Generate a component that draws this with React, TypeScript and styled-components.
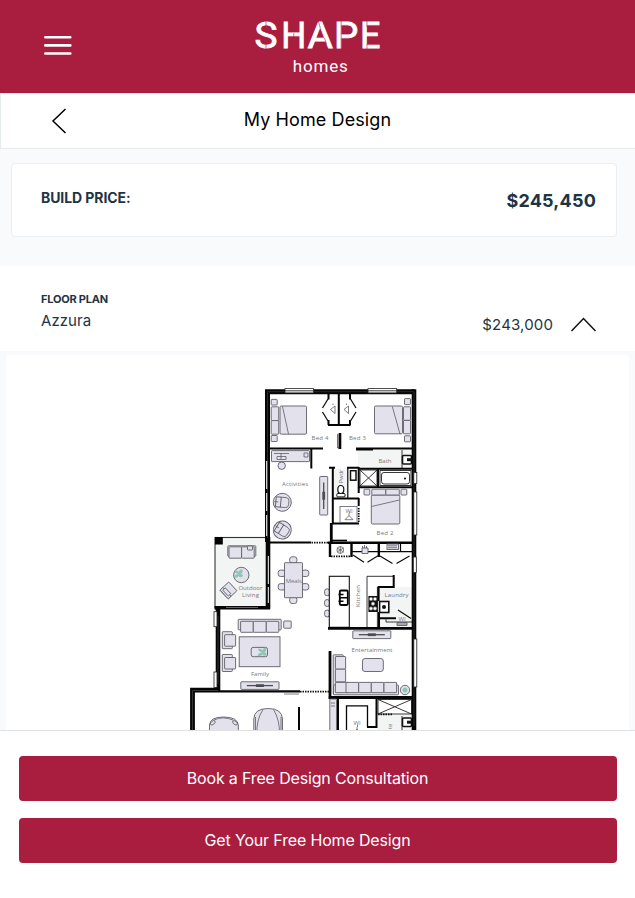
import React from "react";
import styled, { createGlobalStyle } from "styled-components";

const GlobalStyle = createGlobalStyle`
  * { box-sizing: border-box; }
  html, body { margin: 0; padding: 0; }
  body { background: #f8fafc; font-family: Inter, "Open Sans", sans-serif; color: #1d3444; overflow: hidden; }
  button { font: inherit; border: 0; padding: 0; background: none; cursor: pointer; }
`;

const Screen = styled.div`
  width: 100%;
  height: 898px;
  display: flex;
  flex-direction: column;
  overflow: hidden;
`;

const Header = styled.header`
  flex: none;
  height: 93px;
  padding: 0 43px;
  display: grid;
  grid-template-columns: 30px 1fr 30px;
  align-items: start;
  background: #a91d3f;
`;

const MenuButton = styled.button`
  margin-top: 35px;
  height: 21px;
  svg { display: block; }
`;

const Logo = styled.svg`
  display: block;
  justify-self: center;
  width: 130px;
  height: 62px;
  margin-top: 16px;
`;

const TitleBar = styled.div`
  flex: none;
  height: 56px;
  border: 1px solid #e5eaeb;
  border-right: 0;
  padding: 0 50px;
  display: grid;
  grid-template-columns: 18px 1fr 18px;
  align-items: center;
  background: #fff;
`;

const BackButton = styled.button`
  height: 26px;
  svg { display: block; }
`;

const Title = styled.h1`
  margin: 0 1px 3px 0;
  text-align: center;
  font-size: 18px;
  line-height: 24px;
  font-weight: 400;
  letter-spacing: 0.1px;
  color: #000;
`;

const Content = styled.main`
  flex: 1;
  min-height: 0;
  overflow: hidden;
`;

const PriceCard = styled.section`
  height: 74px;
  margin: 14px 18px 29px 11px;
  padding: 0 20px 0 29px;
  display: flex;
  justify-content: space-between;
  border: 1px solid #ebeff2;
  border-radius: 4px;
  background: #fff;
`;

const PriceLabel = styled.span`
  margin-top: 24px;
  font-size: 14px;
  line-height: 20px;
  font-weight: 700;
  letter-spacing: -0.08px;
`;

const PriceTotal = styled.span`
  margin-top: 24px;
  font-size: 18px;
  line-height: 26px;
  font-weight: 700;
  letter-spacing: 0.2px;
`;

const OptionRow = styled.section`
  height: 85px;
  padding: 24px 38px 0 41px;
  display: flex;
  justify-content: space-between;
  background: #fff;
`;

const OptionName = styled.div`
  display: flex;
  flex-direction: column;
  gap: 2px;
  font-size: 15px;
  line-height: 22px;
  letter-spacing: 0.05px;
`;

const OptionKind = styled.span`
  font-size: 11px;
  line-height: 18px;
  font-weight: 700;
  letter-spacing: -0.22px;
`;

const OptionPrice = styled.div`
  display: flex;
  align-items: center;
  gap: 17px;
  height: 20px;
  margin-top: 24px;
  font-size: 15px;
  letter-spacing: 0.15px;
`;

const PlanPanel = styled.section`
  height: 520px;
  margin: 4px 6px 0;
  padding-top: 25px;
  padding-left: 174px;
  border-radius: 4px;
  background: #fff;
`;

const PlanDrawing = styled.svg`
  display: block;
  width: 250px;
  height: 360px;
  .wall { stroke: #050505; fill: none; }
  .win { fill: #fff; stroke: #222; stroke-width: 0.8; }
  .line { fill: none; stroke: #222; stroke-width: 0.9; }
  .fold { fill: none; stroke: #111; stroke-width: 1.3; }
  .dots { fill: none; stroke: #111; stroke-width: 1.8; stroke-dasharray: 1.5 1; }
  .furn { fill: #e3e2ec; stroke: #5d5d68; stroke-width: 0.9; }
  .thin { fill: none; stroke: #5d5d68; stroke-width: 0.8; }
  .wet { fill: #f2f5f4; stroke: none; }
  .plant { fill: #91c5b4; stroke: none; }
  text { font-family: "Open Sans", sans-serif; font-size: 6px; fill: #77777c; text-anchor: middle; }
`;

const Footer = styled.footer`
  flex: none;
  height: 168px;
  padding: 25px 18px 0 19px;
  display: flex;
  flex-direction: column;
  gap: 17px;
  border-top: 1px solid #e0e2e4;
  background: #fff;
`;

const ActionButton = styled.button`
  height: 45px;
  flex: none;
  border-radius: 4px;
  && {
    background: #a91d3f;
    padding: 0 21px 2px 0;
    font-size: 16px;
    letter-spacing: -0.16px;
  }
  color: #fff;
`;

type Point = { x: number; y: number };
type Box = Point & { w: number; h: number; r?: number };

const Piece = ({ x, y, w, h, r = 0.6 }: Box) => <rect className="furn" x={x} y={y} width={w} height={h} rx={r} />;

const MediaUnit = ({ x, y, w, h }: Box) => (
  <g>
    <Piece x={x} y={y} w={w} h={h} />
    {w > h ? (
      <>
        <path d={`M${x + 6} ${y + h / 2}H${x + w - 6}`} stroke="#4c4c55" strokeWidth="1.3" />
        <path d={`M${x + w / 2 - 4} ${y + h / 2}h8`} stroke="#4c4c55" strokeWidth="2.8" />
      </>
    ) : (
      <>
        <path d={`M${x + w / 2} ${y + 6}V${y + h - 6}`} stroke="#4c4c55" strokeWidth="1.3" />
        <path d={`M${x + w / 2} ${y + h / 2 - 4}v8`} stroke="#4c4c55" strokeWidth="2.8" />
      </>
    )}
  </g>
);

const TubChair = ({ x, y, turn }: Point & { turn: number }) => (
  <g transform={`translate(${x} ${y}) rotate(${turn})`}>
    <circle className="furn" r="9" />
    <path className="thin" d="M-2 -5h5.5q3 0 3 3v4q0 3 -3 3H-2" />
    <rect className="furn" x="-6.5" y="-5" width="5" height="10" />
    <path className="thin" d="M-8 0h4" />
  </g>
);

const ArmChair = ({ x, y }: Point) => (
  <g>
    <Piece x={x} y={y} w={10} h={17} />
    <Piece x={x + 2.3} y={y + 3} w={11} h={11.5} />
  </g>
);

const Wardrobe = ({ x, y }: Point) => (
  <path className="thin" d={`M${x} ${y}l-4 4.2h8zM${x} ${y}v-2q2 -1 0 -2`} />
);

const Basin = ({ x, y }: Point) => (
  <g>
    <rect x={x} y={y} width="9" height="8.5" rx="1" fill="#fff" stroke="#111" strokeWidth="1.6" />
    <path d={`M${x + 9} ${y + 4.2}h-4.5`} stroke="#111" strokeWidth="3" />
  </g>
);

const Plant = ({ x, y }: Point) => (
  <path
    className="plant"
    transform={`translate(${x} ${y})`}
    d="M0 0Q-5 -1 -4 -4Q-1 -4 0 -2Q1 -6 4 -4Q4 -1 2 0Q6 1 3 3Q1 4 0 2Q-2 5 -5 3Q-4 0 0 0Z"
  />
);

const Bedrooms = () => (
  <g>
    <path className="wall" strokeWidth="2" d="M338.8 394V425M328 425H350.5M328.5 394v5.5M328.5 420v5M350 394v5.5M350 420v5" />
    <path className="fold" d="M328 399l-5.5 9M322.5 412l5.5 9M350.5 399l5.5 9M356 412l-5.5 9" />
    <Piece x={280} y={406} w={26.5} h={28.2} r={1.2} />
    <Piece x={271.2} y={406.8} w={7.5} h={13.8} />
    <Piece x={271.2} y={420.6} w={7.5} h={13.6} />
    <Piece x={271.2} y={399.4} w={6} h={5.6} />
    <Piece x={271.2} y={435.5} w={6} h={6} />
    <path className="thin" d="M282.5 406.5L288.5 434" />
    <Piece x={374.5} y={406} w={28} h={27.8} r={1.2} />
    <Piece x={403.5} y={406.8} w={7} h={13.6} />
    <Piece x={403.5} y={420.4} w={7} h={13.4} />
    <Piece x={404.5} y={398.6} w={6} h={6} />
    <Piece x={404.5} y={435.8} w={6} h={6} />
    <path className="thin" d="M392.3 406.5L400 434" />
    <path className="thin" d="M330.5 409.5l4.5 -3.5v7.5zM333 405v-1.5M344 409.5l4.5 -3.5v7.5zM346.5 405v-1.5" />
    <text x="320" y="440.2" textLength="17">Bed 4</text>
    <text x="357.4" y="440.2" textLength="17">Bed 3</text>
    <path className="wall" strokeWidth="2" d="M270 448.4H323M356 448.4H412" />
    <path className="wall" strokeWidth="2.6" d="M340 433V449" />
    <path className="line" d="M337.8 434v14h2" />
  </g>
);

const Activities = () => (
  <g>
    <Piece x={271.5} y={450.6} w={38} h={11} />
    <path className="thin" d="M274 453.5h15M277 456.5h9v3h-9zM281 453v6M304 453h4v4h-4z" />
    <circle className="furn" cx="281.7" cy="465.7" r="3.7" />
    <path className="wall" strokeWidth="2" d="M311.3 448V468.5" />
    <TubChair x={282.3} y={502.3} turn={5} />
    <TubChair x={282.3} y={530} turn={32} />
    <MediaUnit x={319.7} y={476.5} w={8} h={38.5} />
    <text x="295" y="485.9" textLength="26">Activities</text>
    <path className="wall" strokeWidth="2" d="M270 542.6H311" />
    <path className="dots" d="M311.5 542.6H328" />
  </g>
);

const BathRooms = () => (
  <g>
    <rect className="wet" x="358" y="450" width="53" height="18" />
    <rect className="wet" x="333" y="469" width="14" height="28" />
    <path className="wall" strokeWidth="2" d="M332.8 467v56.5M329 467.7h6M347 467.7h12M358.7 467v26M332 498.6H359M332 523.4H359M358.7 498v8M356 449.4h17" />
    <path className="wall" strokeWidth="1.2" d="M347.8 468V498" />
    <rect x="350.5" y="470.7" width="5.5" height="9.5" fill="#fff" stroke="#111" strokeWidth="1.5" />
    <path className="dots" d="M358.7 508V523" />
    <rect className="thin" x="340" y="506.5" width="17" height="16" />
    <text x="349" y="513">WI</text>
    <Wardrobe x={349} y={515.5} />
    <rect x="336.8" y="493.5" width="8.2" height="3.4" rx="1" fill="#fff" stroke="#111" />
    <ellipse cx="340.8" cy="489.5" rx="3" ry="4" fill="#fff" stroke="#111" strokeWidth="1.2" />
    <text transform="translate(342.6 476.5) rotate(-90)" textLength="14">Pwdr</text>
    <text x="385" y="462.7" textLength="13">Bath</text>
    <path className="line" d="M402 450V468" />
    <Basin x={402.5} y={455.5} />
    <path className="wall" strokeWidth="2" d="M358 487.3H412M378 469V487M358 468.8H412" />
    <rect className="line" x="360" y="470" width="17" height="16" />
    <path className="line" d="M360 470l17 16M377 470l-17 16" />
    <rect className="line" x="380" y="470.5" width="31" height="15" />
    <rect className="line" x="381.5" y="472.5" width="28" height="11.5" rx="2.5" />
    <circle cx="405" cy="478.5" r="1" />
    <Piece x={371.3} y={495} w={28.5} h={29} r={1.2} />
    <Piece x={371.8} y={489.2} w={14} h={5.8} />
    <Piece x={385.8} y={489.2} w={13.5} h={5.8} />
    <Piece x={364} y={489.2} w={5.8} h={5.8} />
    <Piece x={401} y={489.2} w={5.8} h={5.8} />
    <path className="thin" d="M371.5 506.5L399.5 500" />
    <text x="385" y="535.4" textLength="17">Bed 2</text>
    <path className="wall" strokeWidth="2.8" d="M331.3 523V543" />
    <path className="wall" strokeWidth="1.4" d="M332 540.6h15" />
  </g>
);

const Outdoor = () => (
  <g>
    <rect x="215" y="537.5" width="52" height="70" fill="#f2f5f4" stroke="#333" strokeWidth="1.1" />
    <rect x="215" y="537" width="7.8" height="7.5" />
    <path className="wall" strokeWidth="4.6" d="M268 537V609" />
    <path d="M268.3 556v28M268.3 587v16" stroke="#fff" strokeWidth="1" />
    <path className="wall" strokeWidth="3.4" d="M214.5 607.7H270" />
    <path d="M226 607.4h32" stroke="#999" strokeWidth=".7" />
    <Piece x={227.8} y={545.8} w={28} h={10.5} />
    <Piece x={229} y={546.8} w={12.6} h={11.4} />
    <Piece x={241.6} y={546.8} w={12.6} h={11.4} />
    <Piece x={247.5} y={546} w={5} h={4} />
    <circle className="furn" cx="241.3" cy="575" r="7.7" />
    <Plant x={238.7} y={574} />
    <g transform="rotate(-43 228.4 590.5)">
      <Piece x={222.5} y={584.5} w={12} h={12} />
      <Piece x={222.5} y={584.5} w={4} h={12} />
      <Piece x={224.5} y={586.5} w={3.5} h={8} />
    </g>
    <text x="250.4" y="590.2" textLength="24">Outdoor</text>
    <text x="250.4" y="597.4" textLength="17">Living</text>
  </g>
);

const Meals = () => (
  <g>
    {[[293.3, 560], [293.3, 600.3], [281.8, 573.3], [281.8, 586.8], [305.2, 573.3], [305.2, 586.8]].map(([x, y]) => (
      <Piece key={`${x}-${y}`} x={x - 3.6} y={y - 3.2} w={7.2} h={6.4} r={2.4} />
    ))}
    <Piece x={284.5} y={562.7} w={18} h={35} />
    <text x="293.8" y="583.2" textLength="16">Meals</text>
  </g>
);

const Kitchen = () => (
  <g>
    <rect className="wet" x="379" y="587" width="33" height="40" />
    <path className="wall" strokeWidth="2.4" d="M328 542.7H413M330 542v15M351.5 542v15M378.8 542v15" />
    <path className="wall" strokeWidth="1.2" d="M331 540.3h16M352 551.6H378M380 551.6H412M400.5 543v8.5" />
    <path className="dots" d="M331 556.4H351" />
    <path className="thin" d="M340.3 546.5v7M337 548l6.6 4M343.6 548l-6.6 4" />
    <circle className="thin" cx="340.3" cy="550" r="3.4" />
    <path className="furn" d="M362 548h6v5.5h-6zM362.5 548v-2M364.5 548v-3M366.5 548v-2" />
    <rect className="furn" x="387" y="544" width="11.5" height="5.5" />
    <path className="thin" d="M388 545.8h9M388 547.7h9" />
    <path className="fold" d="M353 555l11 7.2M367.5 562.2l10.5 -6.5M380 556l12.5 7.5M396.5 563.5l13 -7.5" />
    {[592.3, 603, 613.5].map((y) => <Piece key={y} x={324.6} y={y - 3.5} w={5} h={7} r={2.5} />)}
    <rect x="329.3" y="576.3" width="20" height="51" fill="#fff" stroke="#111" strokeWidth="1.1" />
    <rect x="339.8" y="590.5" width="8" height="14.5" rx="1.2" fill="#fff" stroke="#000" strokeWidth="1.8" />
    <path className="wall" strokeWidth="1.6" d="M340 597.8h8M338.5 594.5h5M338.5 601.3h5" />
    <text transform="translate(360 596) rotate(-90)" textLength="22">Kitchen</text>
    <path className="line" d="M367 627V576.3H394M377.4 627V587" />
    <path className="wall" strokeWidth="2" d="M393.7 575v12H378.6v14" />
    <path className="wall" strokeWidth="2" d="M379 618.3h17M379 612v16" />
    <rect x="368.4" y="596" width="9.3" height="16" fill="#111" />
    {[[371, 599], [375, 599], [371, 608.5], [375, 608.5], [373, 603.7]].map(([x, y]) => (
      <circle key={`${x}-${y}`} cx={x} cy={y} r="1.7" fill="#fff" stroke="#777" strokeWidth=".6" />
    ))}
    <rect x="379.6" y="601.5" width="9.2" height="11" fill="#fff" stroke="#111" strokeWidth="1.6" />
    <circle cx="384" cy="607" r="2" fill="#111" />
    <text x="396.5" y="596.8" textLength="24">Laundry</text>
    <path className="fold" d="M398 610l13 8.5" />
    <path className="line" d="M386 618v4h26" />
    <text x="402" y="620.5">WI</text>
    <path className="furn" d="M397 622.5h10v3h-10zM397 624h10" />
    <path className="wall" strokeWidth="2.7" d="M328 628.4H413" />
  </g>
);

const Family = () => (
  <g>
    <Piece x={238.2} y={619.3} w={43} h={10.5} />
    <Piece x={240.6} y={621.3} w={12.7} h={11} />
    <Piece x={253.3} y={621.3} w={13} h={11} />
    <Piece x={266.3} y={621.3} w={12.5} h={11} />
    <Piece x={283.7} y={621} w={7.5} h={7.2} />
    <ArmChair x={222.3} y={631.7} />
    <ArmChair x={222.3} y={654.5} />
    <rect className="furn" x="239.2" y="636.8" width="40.8" height="29.9" />
    <rect className="furn" x="251.2" y="647.4" width="16.3" height="9.3" rx="2" />
    <Plant x={262.5} y={652.5} />
    <text x="260" y="675.7" textLength="18">Family</text>
    <MediaUnit x={240.8} y={681.8} w={38.2} h={7.6} />
    <path className="wall" strokeWidth="4.6" d="M218 609V691" />
    <path d="M218 616v68" stroke="#555" strokeWidth=".6" />
    <rect className="win" x="214" y="611.7" width="3" height="15" />
    <rect className="win" x="214" y="672" width="3" height="15.5" />
    <path className="wall" strokeWidth="2.2" d="M219 691.4H300" />
  </g>
);

const Entertainment = () => (
  <g>
    <path className="wall" strokeWidth="2.8" d="M330 651V699M328.5 697.5H414" />
    <MediaUnit x={352.8} y={630.8} w={38} h={7.8} />
    <text x="372" y="652" textLength="41">Entertainment</text>
    <rect className="furn" x="362.5" y="658.5" width="20.8" height="13" rx="2.5" />
    <Piece x={333.2} y={654.8} w={10} h={39.5} />
    {[656.5, 669.2].map((y) => <Piece key={y} x={335.4} y={y} w={10.2} h={12.7} />)}
    <Piece x={333.5} y={685} w={65} h={9.8} />
    {[335.4, 346, 358.7, 371.3, 384].map((x) => <Piece key={x} x={x} y={682.4} w={12.6} h={10.3} />)}
    <circle className="furn" cx="405" cy="690" r="4.7" />
    <circle className="plant" cx="405" cy="690" r="2.5" />
  </g>
);

const LowerRooms = () => (
  <g>
    <path className="wall" strokeWidth="4.8" d="M192.5 740V690.2H219" />
    <path d="M192.5 740V690.5H218" fill="none" stroke="#555" strokeWidth=".6" />
    <path className="dots" d="M300 691.7H329" />
    <path className="wall" strokeWidth="2" d="M299 707V740" />
    <path className="thin" d="M284 694h15" />
    <path className="furn" d="M209.5 740V725Q210 717 223.5 717Q237.5 717 238.3 725V740" />
    <path className="thin" d="M214 720Q223 715.8 233 720" />
    <ellipse className="thin" cx="212.8" cy="722.8" rx="2.8" ry="1.6" transform="rotate(-40 212.8 722.8)" />
    <ellipse className="thin" cx="235" cy="722.8" rx="2.8" ry="1.6" transform="rotate(40 235 722.8)" />
    <path className="furn" d="M253.8 740V719Q254 708.5 268.3 708.5Q282 708.5 282.5 719V740" />
    <path className="thin" d="M257 735Q256 720 263 709.5M279.5 735Q280 720 273.5 709.5M255.5 735V717M281 735V717" />
    <Piece x={329.8} y={699} w={6.7} h={42} />
    <path className="thin" d="M331 703h4M331 706h4" />
    <path className="wall" strokeWidth="2" d="M338 698V740M376.5 698V727M367 727H377.5" />
    <path className="wall" strokeWidth="1.3" d="M346.5 740V705.8H367.5V727" />
    <rect className="wet" x="378" y="715" width="34" height="25" />
    <rect className="line" x="378" y="699.5" width="33.5" height="14.5" />
    <path className="line" d="M378 699.5l33.5 14.5M411.5 699.5L378 714" />
    <path className="dots" d="M378 714.3H392" />
    <path className="line" d="M402 716V740" />
    <Basin x={402.5} y={718} />
    <text x="357" y="724.6">WI</text>
    <Wardrobe x={357} y={729} />
    <text transform="translate(391.6 726.5) rotate(-90)">te</text>
  </g>
);

const OuterWalls = () => (
  <g>
    <path className="wall" strokeWidth="5" d="M267.5 542V391.7H414" />
    <path className="wall" strokeWidth="4.6" d="M414 389.2V740" />
    <path d="M267.5 538V391.7H414V726" fill="none" stroke="#444" strokeWidth=".6" />
    <rect className="win" x="285" y="388.6" width="28.5" height="4.3" />
    <rect className="win" x="368" y="388.6" width="28.7" height="4.3" />
    <path className="line" d="M285 390.8h28.5M368 390.8h28.7" />
    <path d="M266.7 461v28M266.7 493v18M266.7 515v21" stroke="#fff" strokeWidth="1" />
    <rect className="win" x="413.8" y="472.5" width="3" height="11" />
    <rect className="win" x="413.8" y="492" width="3" height="43" />
    <rect className="win" x="413.3" y="557" width="3" height="15.5" />
    <rect className="win" x="413.8" y="639" width="3" height="48" />
  </g>
);

const FloorPlan = () => (
  <PlanDrawing viewBox="180 380 250 360" role="img" aria-label="Azzura floor plan">
    <Bedrooms />
    <Activities />
    <BathRooms />
    <Outdoor />
    <Meals />
    <Kitchen />
    <Family />
    <Entertainment />
    <LowerRooms />
    <OuterWalls />
  </PlanDrawing>
);

const ShapeLogo = () => (
  <Logo viewBox="253 16 130 62" role="img" aria-label="SHAPE homes">
    <g fill="#fff" fontFamily="Roboto, sans-serif">
      <g fontSize="36.5" stroke="#fff" strokeWidth="0.8">
        <text x="254.6" y="48.3" textLength="23" lengthAdjust="spacingAndGlyphs">S</text>
        <text x="281.2" y="48.3" textLength="25" lengthAdjust="spacingAndGlyphs">H</text>
        <text x="307.5" y="48.3" textLength="25.4" lengthAdjust="spacingAndGlyphs">A</text>
        <text x="334" y="48.3" textLength="24.3" lengthAdjust="spacingAndGlyphs">P</text>
        <text x="360" y="48.3" textLength="20.4" lengthAdjust="spacingAndGlyphs">E</text>
      </g>
      <text x="292.8" y="71.6" fontSize="17" textLength="55" lengthAdjust="spacing">homes</text>
    </g>
    <path d="M266 21v6M266 44v6M293.8 33v6M318.3 21l2 7M324.5 38l2 6M341.2 21v28M367 21v6M367 44v5" fill="none" stroke="#a91d3f" strokeWidth="0.6" />
  </Logo>
);

export default function App() {
  return (
    <Screen>
      <GlobalStyle />
      <Header>
        <MenuButton aria-label="Menu">
          <svg width="30" height="21" viewBox="0 0 30 21" stroke="#fff" strokeWidth="2.6" strokeLinecap="round">
            <path d="M2.3 2.3h25M2.3 10.4h25M2.3 18.5h25" />
          </svg>
        </MenuButton>
        <ShapeLogo />
      </Header>
      <TitleBar>
        <BackButton aria-label="Back">
          <svg width="18" height="26" viewBox="0 0 18 26" fill="none" stroke="#000" strokeWidth="1.5">
            <path d="M14.5 1L2 13l12.5 12" />
          </svg>
        </BackButton>
        <Title>My Home Design</Title>
      </TitleBar>
      <Content>
        <PriceCard>
          <PriceLabel>BUILD PRICE:</PriceLabel>
          <PriceTotal>$245,450</PriceTotal>
        </PriceCard>
        <OptionRow>
          <OptionName>
            <OptionKind>FLOOR PLAN</OptionKind>
            Azzura
          </OptionName>
          <OptionPrice>
            $243,000
            <svg width="27" height="16" viewBox="0 0 27 16" fill="none" stroke="#111" strokeWidth="1.5">
              <path d="M1.5 15L13.5 2.5l12 12.5" />
            </svg>
          </OptionPrice>
        </OptionRow>
        <PlanPanel>
          <FloorPlan />
        </PlanPanel>
      </Content>
      <Footer>
        <ActionButton>Book a Free Design Consultation</ActionButton>
        <ActionButton>Get Your Free Home Design</ActionButton>
      </Footer>
    </Screen>
  );
}
